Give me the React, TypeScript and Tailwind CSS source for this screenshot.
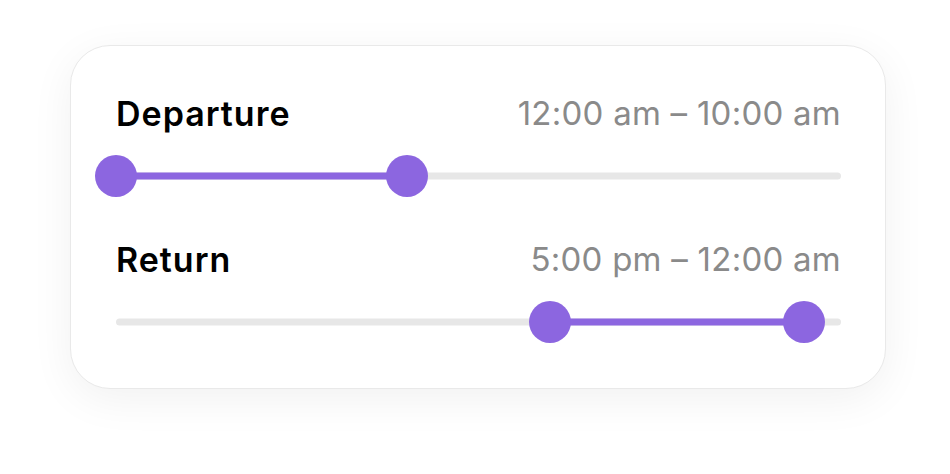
import React from 'react';

type Range = { label: string; value: string; from: number; to: number };

// Thumb positions are fractions of the track width.
const RANGES: Range[] = [
  { label: 'Departure', value: '12:00 am – 10:00 am', from: 0, to: 0.401 },
  { label: 'Return', value: '5:00 pm – 12:00 am', from: 0.598, to: 0.949 },
];

const RangeTrack: React.FC<{ from: number; to: number }> = ({ from, to }) => (
  <div className="relative h-[42px]">
    <div className="absolute left-0 right-0 top-1/2 h-[7px] -translate-y-1/2 rounded-full bg-[#e7e7e7]" />
    <div
      className="absolute top-1/2 h-[7px] -translate-y-1/2 bg-[#8c66e0]"
      style={{ left: `${from * 100}%`, width: `${(to - from) * 100}%` }}
    />
    {[from, to].map((p, i) => (
      <span
        key={i}
        className="absolute top-0 h-[42px] w-[42px] -translate-x-1/2 rounded-full bg-[#8c66e0]"
        style={{ left: `${p * 100}%` }}
      />
    ))}
  </div>
);

export default function App() {
  return (
    <div className="min-h-screen bg-white pt-[45px] font-['Inter',sans-serif]">
      <div className="ml-[70px] w-[816px] rounded-[40px] border-[1.5px] border-[#e9e9e9] bg-white pb-[45px] pl-[45px] pr-[44px] pt-[47px] shadow-[0_10px_44px_rgba(0,0,0,0.06)]">
        {RANGES.map((r, idx) => (
          <div key={r.label} className={idx > 0 ? 'mt-[42px]' : ''}>
            <div className="flex items-center justify-between leading-[41px]">
              <span className="text-[34px] font-semibold tracking-[1px] text-black">{r.label}</span>
              <span className="text-[33px] tracking-[0.25px] text-[#8a8a8a]">{r.value}</span>
            </div>
            <div className="mt-[21px]">
              <RangeTrack from={r.from} to={r.to} />
            </div>
          </div>
        ))}
      </div>
    </div>
  );
}
